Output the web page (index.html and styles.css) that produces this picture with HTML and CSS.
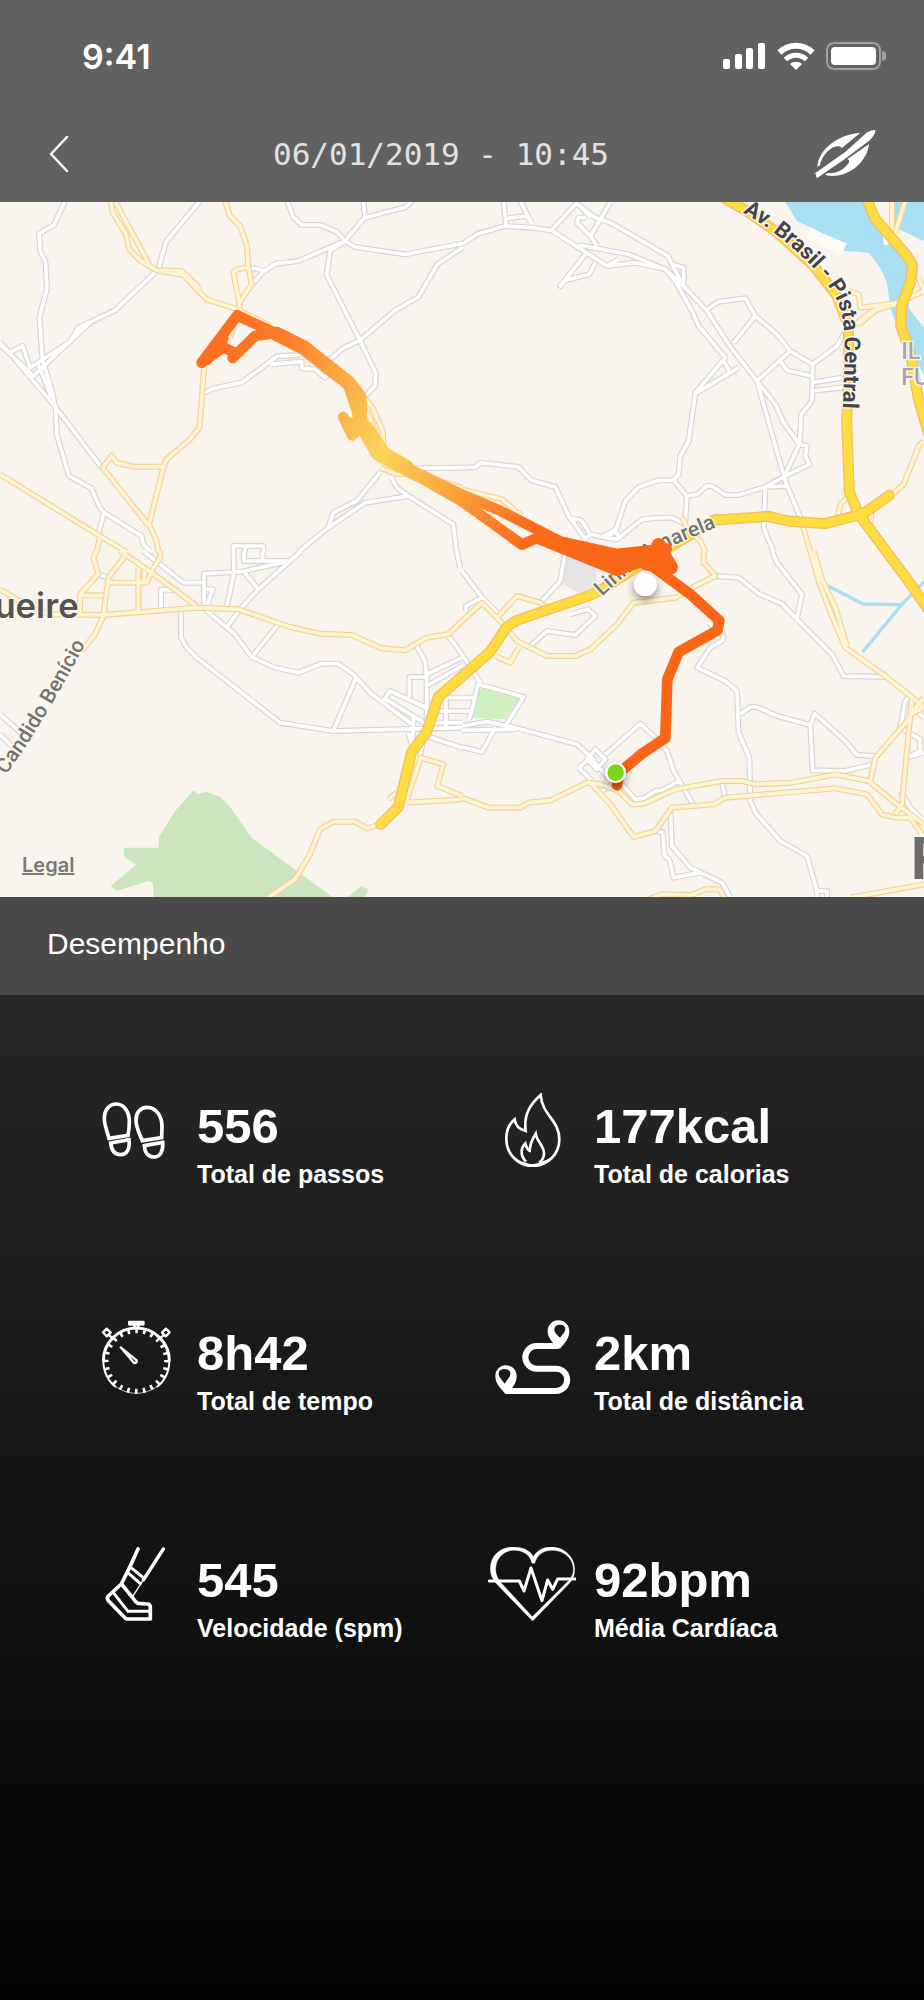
FILE: index.html
```html
<!DOCTYPE html>
<html lang="pt-BR">
<head>
    <meta charset="UTF-8">
    <meta name="viewport" content="width=device-width, initial-scale=1.0">
    <title>Desempenho</title>
    <link rel="stylesheet" href="styles.css">
</head>
<body>
    <header class="header">
        <div class="status-bar">
            <span class="clock">9:41</span>
            <div class="status-icons">
                <!-- signal -->
                <svg width="43" height="28" viewBox="0 0 43 28" fill="#fff">
                    <rect x="0" y="17" width="7" height="10" rx="2"/>
                    <rect x="12" y="12" width="7" height="15" rx="2"/>
                    <rect x="23" y="6" width="7" height="21" rx="2"/>
                    <rect x="35" y="1" width="7" height="26" rx="2"/>
                </svg>
                <!-- wifi -->
                <svg width="38" height="28" viewBox="0 0 38 28" fill="none" stroke="#fff" stroke-width="6">
                    <path d="M2.500 10.500 A23.500 23.500 0 0 1 35.500 10.500"/>
                    <path d="M8.500 17.500 A15 15 0 0 1 29.500 17.500" stroke-width="5"/>
                    <path d="M19 28 L13 22 A9 9 0 0 1 25 22 Z" fill="#fff" stroke="none"/>
                </svg>
                <!-- battery -->
                <svg width="60" height="28" viewBox="0 0 60 28">
                    <rect x="1" y="1" width="53" height="26" rx="7" fill="none" stroke="#a0a0a0" stroke-width="2"/>
                    <rect x="5" y="5" width="45" height="18" rx="4" fill="#fff"/>
                    <path d="M56 9 a5 5 0 0 1 0 10 Z" fill="#a0a0a0"/>
                </svg>
            </div>
        </div>
        <nav class="nav">
            <button class="back" type="button" aria-label="Voltar">
                <svg width="20" height="38" viewBox="0 0 20 38" fill="none" stroke="#fff" stroke-width="2.500" stroke-linecap="round" stroke-linejoin="round">
                    <path d="M18 2 L2 19 L18 36"/>
                </svg>
            </button>
            <h1>06/01/2019 - 10:45</h1>
            <a class="brand" href="#" aria-label="Início">
                <svg width="64" height="50" viewBox="45 27 189 150" fill="#fff">
                    <path d="M46 161 L56 155 L140 96 L206 37 Q218 30 231 30 Q230 46 212 62 L140 116 L56 174 L52 168 L53 161 Z"/>
                    <path d="M57 141 C56 104 100 46 186 38 L130 84 C124 76 108 78 96 87 C80 98 68 118 64 136 Z"/>
                    <path d="M212 72 C206 120 160 168 100 168 Q84 168 80 163 L88 159 C112 162 136 150 150 130 Q156 120 146 118 Z"/>
                </svg>
            </a>
        </nav>
    </header>

    <main>
        <section class="map">
            <svg class="map-canvas" viewBox="0 0 2772 2085" preserveAspectRatio="xMidYMid slice" role="img" aria-label="Mapa do percurso">
                <defs>
                    <g id="minor">
                        <g transform="translate(0 -3)">
                            <path d="M195 0 L162 72 L117 98 L121 150 L136 182 L141 262 L118 350 L128 480 L155 565 L168 630 L170 700 L207 825 L275 862 L298 918 L312 935 L425 1005 L430 1030 L450 1050"/>
                            <path d="M600 0 L498 122 L475 205 L345 328 L235 380 L210 422 L90 500 L68 435 L28 455 L0 425"/>
                            <path d="M270 365 L100 525 L0 430 M28 455 L160 610 L305 800 M115 490 L155 590 M312 935 L295 1000"/>
                            <path d="M862 0 L880 48 L905 72 L962 72 L1010 92 L1035 120 L1095 48 L1090 0 M1095 50 L1218 18 L1235 0"/>
                            <path d="M1035 120 L990 150 L980 222 L1080 418 L1128 518 L1125 555 L1095 585"/>
                            <path d="M1035 120 L1065 138 L1215 160 L1386 128 M1386 140 L1312 190 L1255 288 L1185 328 L1080 418 L1032 440 L985 480"/>
                            <path d="M1035 120 L895 180 L828 188 L790 212 L752 255 M750 200 L790 208 M615 575 L640 562 L725 545 L832 465 L900 462 M810 490 L905 482 L905 502 L945 505 L975 530 L990 515"/>
                            <path d="M1250 802 L1386 800 M1140 815 L1070 900 L1000 935 L985 980 L895 1053 M985 980 L1095 905 L1225 885 L1360 970 L1370 1053 M1175 830 L1190 860 L1225 885"/>
                            <path d="M700 1053 V1035 H790 V1053 M735 1035 V1053"/>
                        </g>
                        <g transform="translate(1386 -3)">
                            <path d="M0 130 L48 98 L130 75 L210 80 L268 88 L350 140 L435 195 L520 185 L610 205 L670 260"/>
                            <path d="M268 88 L345 5 M125 0 L132 75 M175 0 L210 70 M135 52 L195 45 M340 5 L400 50 L445 65 L618 165 L630 190 L665 200 L665 250"/>
                            <path d="M445 5 L385 105 L345 65 L350 50 L372 50 M360 20 L385 50 M385 105 L405 135 M350 132 L500 160 L610 205 L640 240 L690 330 L710 375 L790 470 L700 575 L680 720 L655 765 L650 820 L635 835"/>
                            <path d="M370 160 L295 255 L310 238 L382 220 L400 185 M435 195 L470 175 M630 190 L665 255 L735 330 L800 430 L885 540 L940 610 L965 665 L1012 730 L970 820"/>
                            <path d="M735 325 L770 302 L850 292 L880 345 L815 425 M880 345 L945 400 L985 450 L885 540 M985 450 L1052 490 L1125 435 L1155 385 M955 480 L975 508 L1050 525"/>
                            <path d="M1052 490 L1050 600 L1018 640 L1012 730 L1035 735 L1030 765 L1042 790 L970 825 L910 858 L830 882 L790 882 L750 855 L735 855 L705 880 L675 885 L635 838 L590 838 L530 858 L490 900 L462 985 L420 1008"/>
                            <path d="M1050 545 L1140 530 M1050 570 L1140 560 M885 540 L970 840 L1015 950 M910 858 L975 855 M910 858 L905 980 L935 1053 M705 575 L830 500 M785 480 L805 515"/>
                            <path d="M0 800 L40 798 L55 785 L170 798 L208 838 L280 858 L320 945 L370 1015 L385 1000 L420 1008 L465 1015 L540 955 L590 950 L630 950 L670 970 M320 950 L358 958 L385 1000 M675 885 L670 960 M440 1005 L460 990 L475 1015"/>
                        </g>
                        <g transform="translate(0 1047)">
                            <path d="M430 0 L550 95 L612 95 M612 160 V68 L725 62 L870 30 L905 0 M700 0 L702 65 L680 170 M732 0 V30 L870 30 L775 115 L720 175 L680 230 M730 60 L775 115 M735 30 H860 M788 0 V30"/>
                            <path d="M483 185 V115 L535 118 M618 115 H638 L622 160 M290 70 L328 80 M543 180 V260 L560 290 L590 320 L840 515 L1000 540 L1386 530"/>
                            <path d="M615 175 L705 250 L755 318 L825 350 L895 365 L965 338 L1015 338 L1060 370 L1110 425 L1235 520 M755 318 L835 220 M1068 380 L1000 540"/>
                            <path d="M1150 450 L1170 420 L1300 480 M1150 440 L1280 520 M1228 440 V378 H1280 L1275 330 L1250 285 M1280 530 V370 L1386 320 M1280 405 L1386 345 M1345 255 L1386 310 M1225 545 L1235 580 M1280 555 L1386 590 M1310 480 H1386 M1310 515 H1386 M1338 440 V530 M1345 440 H1386 M1270 560 L1260 620 M1240 500 V540 L1235 580"/>
                            <path d="M0 490 L80 560 M0 550 L50 600 M1370 0 L1380 50"/>
                        </g>
                        <g transform="translate(1386 1047)">
                            <path d="M0 60 L60 140 L12 165 L12 180 M60 140 L115 195 M310 0 L295 90 L235 155 M205 285 L255 240 L340 252 L400 195 L378 175 L325 190"/>
                            <path d="M755 75 L830 80 L890 128 L960 158 L1010 210 L1110 310 L1145 375 L1270 378 M930 0 L945 35 L1020 130 L1005 200"/>
                            <path d="M740 215 L785 255 L780 270 L745 290 L705 350 L790 390 L825 420 L830 545 L862 620 L865 750 L880 785 L955 870 L1035 915 L1065 1020 L1095 1020 V1040 M1065 1020 V1040"/>
                            <path d="M835 490 L865 468 L885 468 L945 495 L1045 522 L1058 488 L1150 570 L1185 612 L1240 615 M1045 522 L1052 658 L1150 660 L1240 638"/>
                            <path d="M0 525 L75 512 L160 530 L345 580 L400 630 M0 538 L160 535 M20 505 L30 480 H0 M30 478 L48 400 L185 438 L130 525 M0 310 L55 395 M0 440 H35 M100 530 L60 603 L0 588"/>
                            <path d="M430 610 L535 518 L580 560 L615 600 L635 660 L690 755 M400 595 L430 625 L405 655 L375 625 Z M350 650 L380 625 M350 650 L400 700 M375 610 L440 680 M420 720 L450 700 M480 700 L520 745 L545 742 L580 720 L600 718 L650 690"/>
                            <path d="M780 695 L788 735 M625 780 L630 885 L685 950 L780 995 L805 1040 M585 840 L602 845 L608 915 L622 925 L635 980 L715 965"/>
                            <path d="M1350 425 L1330 450 L1315 530 L1375 565 V600 L1335 620 L1386 605 M1350 470 L1386 500 M1315 720 L1345 770 L1386 810"/>
                        </g>
                    </g>
                    <g id="secondary">
                        <g transform="translate(0 -3)">
                            <path d="M332 0 L338 35 L378 100 L388 145 L420 178 L470 208 L550 222 L620 295 L712 325 L810 375 M345 0 L450 195 L470 208 L545 210 L600 262"/>
                            <path d="M675 0 L690 45 L720 75 L740 130 L745 195 L755 250 L718 305 L700 215 L710 205 L748 198 M718 305 V330"/>
                            <path d="M612 500 L605 600 L598 680 L570 715 L500 775 L490 800 L447 970 L470 1020 L475 1053 M490 797 L400 797 L350 785 L335 765 L308 800 L447 975"/>
                            <path d="M0 820 L300 1005 L380 1053 M300 1010 L290 1053"/>
                            <path d="M1095 590 L1120 625 L1148 690 L1150 730 M1090 620 L1110 650 L1135 720 M1140 800 L1190 820 L1250 815 L1320 840 L1386 860"/>
                            <path d="M712 330 L690 410"/>
                        </g>
                        <g transform="translate(1386 -3)">
                            <path d="M0 865 L120 895 L180 945 M1160 270 L1190 280 L1195 320 L1315 305 M1155 390 L1230 330 L1300 310 L1386 270 M1190 370 L1250 320 M1290 0 L1290 80 M1330 0 L1300 95 M1370 230 L1386 270"/>
                            <path d="M1386 720 L1370 735 L1325 850 L1280 890 M1155 890 L1135 910 L1128 945 M1230 905 L1225 970 M660 950 L680 990 L715 1020 L730 1053 M1015 950 L1045 1053"/>
                        </g>
                        <g transform="translate(0 1047)">
                            <path d="M0 115 L90 170 L150 190 L310 192 L590 170 L715 175 L870 228 L960 248 L1055 252 L1145 292 L1215 298 L1280 260 L1345 250 L1386 210"/>
                            <path d="M290 0 L280 20 L295 70 L240 130 V190 M240 133 L310 133 M375 15 L325 80 L310 195 L285 250 L245 300 M325 95 L440 95 L455 60 L480 20 V0 M415 50 L415 185 M360 0 L455 65 L590 165 M435 60 L430 95"/>
                            <path d="M805 1040 L885 985 L930 910 L960 835 L1000 812 L1065 812 L1100 832 L1145 820 M1220 755 L1386 745 M1220 750 L1262 620 L1330 640 L1312 705 L1386 735 M1165 745 L1190 725"/>
                        </g>
                        <g transform="translate(1386 1047)">
                            <path d="M0 210 L60 155 L110 205 L165 270 L255 315 L340 315 L385 295 L465 220 L515 155 L640 140 L700 105 L760 75 L725 35 V0 M110 195 L165 135 L235 155 L255 170 M100 315 L145 335 L170 290"/>
                            <path d="M0 740 L80 770 L175 770 L200 755 L265 748 L375 695 L415 700 L470 720 L510 760 L545 758 L640 715 L780 690 L840 690 L880 700 L990 695 L1120 670 L1220 690 L1305 760 L1386 820"/>
                            <path d="M380 690 L445 760 L515 858 L580 840 L630 770 L755 760 L790 740 L1120 712 L1215 730 L1260 790 L1300 800 L1345 800 L1386 860 M1300 790 L1320 760 L1345 490 L1386 440"/>
                            <path d="M1045 0 L1070 90 L1110 195 L1150 290 L1270 375 L1345 435 L1386 470 M1055 0 L1080 85 L1120 170 L1155 285 M1350 440 L1345 500 L1240 620 L1225 690 M1345 490 L1386 470"/>
                            <path d="M560 1045 L600 1030 L690 1032 L730 1015 L775 1015 L785 1040 M1165 1040 L1386 1000"/>
                        </g>
                    </g>
                    <g id="major">
                        <path d="M2176 -10 L2240 27 L2330 90 L2440 190 L2510 280 L2545 370 L2546 480 L2540 660 L2548 870 L2575 935 L2720 1130 L2790 1230"/>
                        <path d="M2600 -10 L2625 50 L2720 160 L2738 190 L2732 240 L2705 310 L2702 370 L2730 450 L2755 590 L2790 710"/>
                        <path d="M2140 955 L2305 943 L2365 957 L2475 965 L2590 935 L2668 880"/>
                        <path d="M2150 952 L2000 1040 L1800 1165 L1770 1180 L1550 1255 L1520 1275 L1470 1350 L1315 1485 L1280 1590 L1235 1650 L1195 1815 L1142 1867"/>
                    </g>
                    <path id="av-brasil" d="M2228 32 C2320 82 2440 180 2496 268 C2548 350 2534 440 2526 680"/>
                    <path id="amarela" d="M1806 1184 Q1920 1076 2010 1034 L2240 938"/>
                    <path id="benicio" d="M-60 1840 Q0 1745 80 1630 Q180 1470 256 1326"/>
                    <linearGradient id="pace" gradientUnits="userSpaceOnUse" x1="600" y1="400" x2="1850" y2="1100">
                        <stop offset="0" stop-color="#fc6b1d"/>
                        <stop offset=".15" stop-color="#fc7c28"/>
                        <stop offset=".45" stop-color="#fbd45c"/>
                        <stop offset=".62" stop-color="#fca33a"/>
                        <stop offset=".8" stop-color="#fb6a1c"/>
                        <stop offset="1" stop-color="#fa6516"/>
                    </linearGradient>
                    <filter id="shadow" x="-50%" y="-50%" width="200%" height="200%">
                        <feDropShadow dx="0" dy="12" stdDeviation="12" flood-opacity=".45"/>
                    </filter>
                </defs>

                <!-- water, parks -->
                <path class="water" d="M2356 0 L2391 57 L2436 77 L2536 147 L2606 152 L2641 197 L2661 242 L2671 317 L2696 387 L2772 520 V377 L2726 317 L2731 177 L2676 97 L2591 0 Z M2686 0 H2772 V117 L2676 72 Z"/>
                <path class="pier" d="M2431 77 L2541 125 L2523 158 L2421 107 Z M2650 80 h15 v50 h-15 Z"/>
                <path class="stream" d="M2484 1152 L2590 1206 L2705 1208 M2772 1140 L2705 1208 L2588 1350"/>
                <path class="park" d="M332 2052 L408 1989 L372 1962 V1937 H476 V1907 L525 1827 L582 1763 L592 1777 L620 1769 L662 1785 L690 1815 L755 1907 L1000 2087 H462 L458 2042 L445 2037 L350 2067 Z M1040 2087 L1085 2052 L1105 2062 L1095 2087 Z"/>
                <path class="park-small" d="M1436 1462 L1481 1459 L1561 1487 L1516 1552 L1406 1547 Z"/>
                <path class="block" d="M1690 1050 L1790 1090 V1165 L1735 1172 L1684 1142 Z"/>

                <!-- roads: casing first, then fill -->
                <use href="#minor" class="minor-casing"/>
                <use href="#minor" class="minor-road"/>
                <use href="#secondary" class="secondary-casing"/>
                <use href="#secondary" class="secondary-road"/>
                <use href="#major" class="major-casing"/>
                <use href="#major" class="major-road"/>

                <!-- labels -->
                <g class="labels">
                    <text class="road-strong"><textPath href="#av-brasil">Av. Brasil - Pista Central</textPath></text>
                    <text class="road"><textPath href="#amarela">Linha Amarela</textPath></text>
                    <text class="road" text-anchor="end"><textPath href="#benicio" startOffset="100%">Candido Benício</textPath></text>
                    <text class="district" x="236" y="1248" text-anchor="end">ueire</text>
                    <text class="island" x="2704" y="470">IL</text>
                    <text class="island" x="2704" y="550">FU</text>
                    <text class="city" x="2732" y="2030">R</text>
                </g>

                <!-- track -->
                <g class="track">
                    <path d="M605 482 L712 340 L830 395 M605 482 L670 436 L700 450 M698 468 L765 402 L830 392 M620 475 L670 410"/>
                    <path class="track-wide" d="M830 396 L910 436 L1045 542"/>
                    <path class="track-wide" d="M1045 542 L1078 585 L1080 660 L1135 755"/>
                    <path class="track-wide" d="M1100 680 L1150 755 L1220 796"/>
                    <path d="M1045 550 L1075 640 L1110 720 M1030 645 L1056 700 L1080 680 L1050 662 M1140 765 L1250 822"/>
                    <path d="M1145 755 L1250 812 L1386 878 L1500 926 L1680 1018 L1850 1056 L2000 1040"/>
                    <path d="M1240 815 L1386 898 L1566 1028 L1610 1008 L1850 1106 L1990 1055"/>
                    <path d="M1640 1012 L1850 1080 L1900 1060 M1740 1044 L1860 1062"/>
                    <path class="track-wide" d="M1976 1030 L1990 1060 L2012 1096 L1940 1084 M1960 1068 L1870 1070"/>
                    <path d="M1960 1095 L2075 1180 L2158 1256 L2152 1285 L2036 1350 L2002 1432 L1996 1608 L1926 1655 L1858 1712 L1851 1750"/>
                </g>
                <circle cx="1936" cy="1148" r="34" fill="#fff" filter="url(#shadow)"/>
                <circle cx="1847" cy="1712" r="28" fill="#7bd31d" stroke="#fff" stroke-width="6" filter="url(#shadow)"/>
            </svg>
            <a class="legal" href="#">Legal</a>
        </section>

        <h2 class="section-title">Desempenho</h2>

        <section class="stats">
            <div class="stat">
                <!-- footprints -->
                <svg class="icon" viewBox="273 639 264 222" stroke-width="11">
                    <path d="M327 775 C320 750 313 735 313 715 C313 688 330 672 349 672 C375 672 388 700 388 725 C388 745 386 755 384 766 Z"/>
                    <path d="M332 789 L387 779 C390 805 382 824 362 824 C340 824 334 808 332 789 Z"/>
                    <path d="M427 782 C416 755 408 742 408 720 C408 697 422 682 441 682 C470 682 486 710 486 740 L485 773 Z"/>
                    <path d="M433 797 L488 787 C490 812 481 831 462 831 C442 831 434 815 433 797 Z"/>
                </svg>
                <div class="stat-text">
                    <strong>556</strong>
                    <span>Total de passos</span>
                </div>
            </div>
            <div class="stat">
                <!-- flame -->
                <svg class="icon" viewBox="78 99 264 222" stroke-width="8">
                    <path d="M236 105 C208 130 184 160 191 213 C172 208 160 196 158 178 C140 192 133 212 133 236 C133 284 170 318 211 318 C258 318 292 282 292 238 C292 180 240 165 236 105 Z"/>
                    <path d="M192 305 C172 285 178 262 190 250 C193 262 198 270 203 272 C204 250 212 235 221 221 C224 245 246 256 246 280 C246 292 240 302 232 308"/>
                    <path d="M142 276 C160 294 175 306 192 308 C204 314 220 314 234 306 C254 302 268 292 282 276 C244 336 178 334 142 276 Z" fill="#fff" stroke="none"/>
                </svg>
                <div class="stat-text">
                    <strong>177kcal</strong>
                    <span>Total de calorias</span>
                </div>
            </div>
            <div class="stat">
                <!-- stopwatch -->
                <svg class="icon" viewBox="33 90 264 222">
                    <path stroke-width="9" d="M70 213 A99 99 0 0 1 268 213"/>
                    <path stroke-width="6" d="M70 213 C70 245 85 275 108 291 M268 213 C268 245 253 275 230 291"/>
                    <path stroke-width="2" d="M108 291 Q138 310 169 310 Q200 310 230 291"/>
                    <circle cx="169" cy="213" r="91" stroke-width="15" stroke-dasharray="8 15.823" stroke-dashoffset="4"/>
                    <path stroke-width="8" stroke-linejoin="round" d="M148 96 H190 V103 H148 Z M164 104 V116 M174 104 V116"/>
                    <path stroke-width="7" stroke-linejoin="round" d="M69 127 L80 116 L92 128 L80 139 Z M246 128 L258 116 L269 127 L258 139 Z M88 136 L99 147 M250 136 L239 147"/>
                    <path stroke-width="7" stroke-linejoin="round" d="M122 172 L170 211 Q172 219 162 219 Z"/>
                </svg>
                <div class="stat-text">
                    <strong>8h42</strong>
                    <span>Total de tempo</span>
                </div>
            </div>
            <div class="stat">
                <!-- route with two pins -->
                <svg class="icon" viewBox="54 90 264 222">
                    <path stroke-width="18" d="M266 168 H200 A34 34 0 0 0 200 236 H258 A33 33 0 0 1 258 303 H108"/>
                    <path fill="#fff" fill-rule="evenodd" stroke="none" d="M265 91 C284 91 298 105 298 124 C298 146 284 160 270 176 L256 168 C244 152 233 142 233 124 C233 105 247 91 265 91 Z M270 143 C281 130 286 124 286 117 C286 108 279 104 270 104 C260 104 253 109 253 119 C253 128 261 134 270 143 Z"/>
                    <path fill="#fff" fill-rule="evenodd" stroke="none" d="M108 226 C127 226 140 240 140 258 C140 276 133 284 124 298 L106 312 C92 294 76 282 76 258 C76 240 90 226 108 226 Z M104 281 C114 266 121 260 121 251 C121 242 113 237 104 237 C94 237 86 242 86 251 C86 260 94 266 104 281 Z"/>
                </svg>
                <div class="stat-text">
                    <strong>2km</strong>
                    <span>Total de distância</span>
                </div>
            </div>
            <div class="stat">
                <!-- leg -->
                <svg class="icon" viewBox="33 81 264 222" stroke-linecap="round" stroke-linejoin="round">
                    <path stroke-width="11" d="M174 87 L150 140 L124 192 L85 228 Q79 235 86 243 L136 295 Q140 297 146 297 H211 V262 Q211 252 202 252 L174 250 Q166 246 160 236 L126 194"/>
                    <path stroke-width="10" d="M250 87 L190 180"/>
                    <path stroke-width="4" d="M190 180 L160 226"/>
                    <path stroke-width="9" d="M153 143 L190 173 M146 160 L181 191 M100 218 L144 274 H210"/>
                </svg>
                <div class="stat-text">
                    <strong>545</strong>
                    <span>Velocidade (spm)</span>
                </div>
            </div>
            <div class="stat">
                <!-- heart rate -->
                <svg class="icon" viewBox="54 81 264 222">
                    <path fill="#fff" stroke-width="1" fill-rule="evenodd" d="M188 303 L78 190 C66 174 61 162 61 146 C61 106 92 81 128 81 C156 81 180 90 190 110 C202 90 222 81 244 81 C284 81 314 112 314 148 C314 172 304 184 296 192 Z M187 290 L288 190 C301 178 310 166 310 148 C310 116 282 91 246 91 C222 91 202 102 194 130 L186 130 C180 104 160 91 130 91 C100 91 77 116 77 148 C77 164 83 176 93 188 Z"/>
                    <path stroke-width="9" stroke-linecap="round" stroke-linejoin="round" d="M58 183 H148 L162 213 L183 144 L216 242 L233 180 L248 208 L263 177 H316"/>
                </svg>
                <div class="stat-text">
                    <strong>92bpm</strong>
                    <span>Média Cardíaca</span>
                </div>
            </div>
        </section>
    </main>
</body>
</html>
```
FILE: styles.css
```css
body {
    margin: 0;
    min-height: 100vh;
    display: flex;
    flex-direction: column;
    font-family: "Liberation Sans", Arial, sans-serif;
    background-color: #030303;
    color: #fff;
}

main {
    flex: 1;
    display: flex;
    flex-direction: column;
}

/* header */
.header {
    background-color: #616161;
    padding-bottom: 6px;
}

.status-bar {
    height: 112px;
    padding: 0 38px 0 82px;
    display: flex;
    align-items: center;
    justify-content: space-between;
}

.clock {
    font-family: Inter, sans-serif;
    font-size: 34px;
    font-weight: 600;
}

.status-icons {
    display: flex;
    gap: 11px;
}

.nav {
    height: 84px;
    padding: 0 47px 0 49px;
    display: flex;
    align-items: center;
    justify-content: space-between;
}

.nav svg {
    display: block;
}

.back {
    padding: 0;
    border: none;
    background: none;
    cursor: pointer;
}

h1 {
    margin: 0;
    font-family: "DejaVu Sans Mono", monospace;
    font-size: 31px;
    font-weight: normal;
    color: #e2e2e2;
}

/* map */
.map {
    position: relative;
    background-color: #f9f4ed;
}

.map-canvas {
    display: block;
    width: 100%;
}

.water {
    fill: #a9dff2;
}

.pier {
    fill: #fdfbf2;
}

.stream {
    fill: none;
    stroke: #a9dff2;
    stroke-width: 10px;
}

.park {
    fill: #cbe5bf;
}

.park-small {
    fill: #d0efc1;
}

.block {
    fill: #e6e5e4;
}

.minor-casing,
.minor-road,
.secondary-casing,
.secondary-road,
.major-casing,
.major-road {
    fill: none;
    stroke-linejoin: round;
}

.minor-casing {
    stroke: #d6d4d4;
    stroke-width: 18px;
}

.minor-road {
    stroke: #fff;
    stroke-width: 11px;
}

.secondary-casing {
    stroke: #f4d09c;
    stroke-width: 18px;
}

.secondary-road {
    stroke: #fff5d0;
    stroke-width: 11px;
}

.major-casing {
    stroke: #f4bd62;
    stroke-width: 33px;
    stroke-linecap: round;
}

.major-road {
    stroke: #ffdd40;
    stroke-width: 25px;
    stroke-linecap: round;
}

.labels text {
    font-family: Roboto, sans-serif;
    font-weight: 500;
    paint-order: stroke;
    stroke: #fbf8f2;
    stroke-width: 8px;
    stroke-linejoin: round;
}

.labels .road-strong {
    font-size: 66px;
    font-weight: 700;
    fill: #45444a;
}

.labels .road {
    font-size: 63px;
    fill: #75736f;
}

.labels .district {
    font-family: Inter, sans-serif;
    font-size: 104px;
    font-weight: 600;
    fill: #55544f;
}

.labels .island {
    font-size: 69px;
    fill: #a5a5a5;
}

.labels .city {
    font-size: 180px;
    font-weight: 700;
    fill: #6c6b67;
}

.track {
    fill: none;
    stroke: url(#pace);
    stroke-width: 32px;
    stroke-linecap: round;
    stroke-linejoin: round;
}

.track-wide {
    stroke-width: 44px;
}

.legal {
    position: absolute;
    left: 22px;
    bottom: 20px;
    font-family: Inter, sans-serif;
    font-size: 20px;
    line-height: 24px;
    font-weight: 600;
    color: #7b7975;
}

/* section title */
.section-title {
    margin: 0;
    padding: 0 47px 4px;
    background-color: #4a4a4a;
    font-size: 30px;
    line-height: 94px;
    font-weight: normal;
}

/* stats */
.stats {
    flex: 1;
    display: grid;
    grid-template-columns: 1fr 1fr;
    align-content: start;
    row-gap: 132px;
    padding: 98px 39px 98px 91px;
    background: linear-gradient(#272727, #030303);
}

.stat {
    display: flex;
    gap: 18px;
}

.icon {
    flex: none;
    width: 88px;
    height: 74px;
    fill: none;
    stroke: #fff;
}

.stat-text {
    display: flex;
    flex-direction: column;
    gap: 6px;
    padding-top: 5px;
}

.stat-text strong {
    font-size: 49px;
    line-height: 56px;
}

.stat-text span {
    font-size: 25px;
    line-height: 28px;
    font-weight: bold;
}
```
